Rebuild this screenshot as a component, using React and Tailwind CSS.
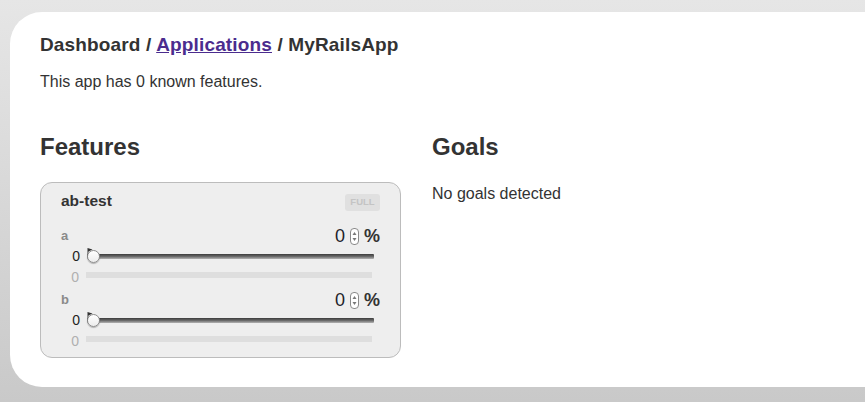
import React from 'react';

const variants = [
  { name: 'a', weight: 0, share: 0 },
  { name: 'b', weight: 0, share: 0 },
];

const Spinner = () => (
  <span className="mx-[5px] inline-flex h-[17px] w-[9px] flex-col items-center justify-center rounded-[4px] border border-[#8a8a8a] bg-white">
    <svg width="5" height="11" viewBox="0 0 5 11">
      <path d="M2.5 1 L4.5 4 L0.5 4 Z" fill="#777" />
      <path d="M2.5 10 L4.5 7 L0.5 7 Z" fill="#777" />
    </svg>
  </span>
);

const Slider = ({ value }) => (
  <div className="relative flex h-[22px] flex-1 items-center mr-[6px]">
    <div className="h-[5px] w-full rounded-[1px] bg-gradient-to-b from-[#3c3c3c] via-[#6a6a6a] to-[#b4b4b4]" />
    <svg className="absolute left-0 top-[3px]" width="6" height="7" viewBox="0 0 6 7">
      <path d="M0.5 0 L0.5 7 L1.5 7 L1.5 3.5 L5.5 1.5 Z" fill="#333" />
    </svg>
    <div
      className="absolute top-[5px] h-[13px] w-[13px] rounded-full border border-[#8c8c8c] bg-gradient-to-b from-white to-[#ececec] shadow-[0_1px_1px_rgba(0,0,0,0.25)]"
      style={{ left: `${value}%` }}
    />
  </div>
);

const Variant = ({ variant, last }) => (
  <div className={last ? 'h-[62px]' : 'h-[64px]'}>
    <div className="flex h-[18px] items-center justify-between">
      <span className="text-[13px] font-bold text-[#8a8a8a]">{variant.name}</span>
      <span className="flex items-center">
        <span className="text-[18px] leading-[20px] text-[#1e1e2a]">{variant.weight}</span>
        <Spinner />
        <span className="text-[18px] font-bold leading-[20px] text-[#333]">%</span>
      </span>
    </div>
    <div className="flex h-[22px] items-center">
      <span className="w-[26px] pr-[7px] text-right text-[14px] text-[#222]">{variant.weight}</span>
      <Slider value={variant.weight} />
    </div>
    <div className="flex h-[22px] items-start">
      <span className="w-[25px] pr-[7px] pt-[1px] text-right text-[14px] font-light leading-[18px] text-[#b0b0b0]">
        {variant.share}
      </span>
      <div className="mt-[5px] mr-[8px] h-[6px] flex-1 bg-[#dedede]" />
    </div>
  </div>
);

const App = () => {
  return (
    <div
      className="h-[402px] w-[865px] overflow-hidden bg-gradient-to-b from-[#e6e6e6] to-[#c9c9c9] pt-[12px] text-[#333]"
      style={{ fontFamily: '"Liberation Sans", Arial, Helvetica, sans-serif' }}
    >
      <div className="ml-[10px] h-[375px] rounded-l-[32px] bg-white pl-[30px] pt-[23px]">
        <h1 className="text-[19px] font-bold leading-[20px] tracking-[0.15px] text-[#333]">
          Dashboard /{' '}
          <a href="#" className="text-[#4b2c8e] underline">
            Applications
          </a>{' '}
          / MyRailsApp
        </h1>
        <p className="mt-[17px] text-[16px] leading-[20px] text-[#333]">This app has 0 known features.</p>

        <div className="mt-[41px] flex gap-[31px]">
          <div className="w-[361px]">
            <h2 className="text-[24px] font-bold leading-[28px] text-[#333]">Features</h2>
            <div className="mt-[21px] rounded-[12px] border border-[#bcbcbc] bg-[#eeeeee] pl-[20px] pr-[20px] pt-[9px] pb-[4px]">
              <div className="flex h-[20px] items-center justify-between">
                <span className="-mt-[2px] text-[15.5px] font-bold leading-[18px] text-[#333]">ab-test</span>
                <span className="mt-[1px] flex h-[17px] w-[35px] items-center justify-center rounded-[3px] bg-[#e0e0e0] text-[9.5px] font-bold text-[#c4c4c4]">
                  FULL
                </span>
              </div>
              <div className="mt-[15px]">
                {variants.map((v, i) => (
                  <Variant key={v.name} variant={v} last={i === variants.length - 1} />
                ))}
              </div>
            </div>
          </div>

          <div className="flex-1">
            <h2 className="text-[24px] font-bold leading-[28px] text-[#333]">Goals</h2>
            <p className="mt-[23px] text-[16px] leading-[20px] text-[#333]">No goals detected</p>
          </div>
        </div>
      </div>
    </div>
  );
};

export default App;
